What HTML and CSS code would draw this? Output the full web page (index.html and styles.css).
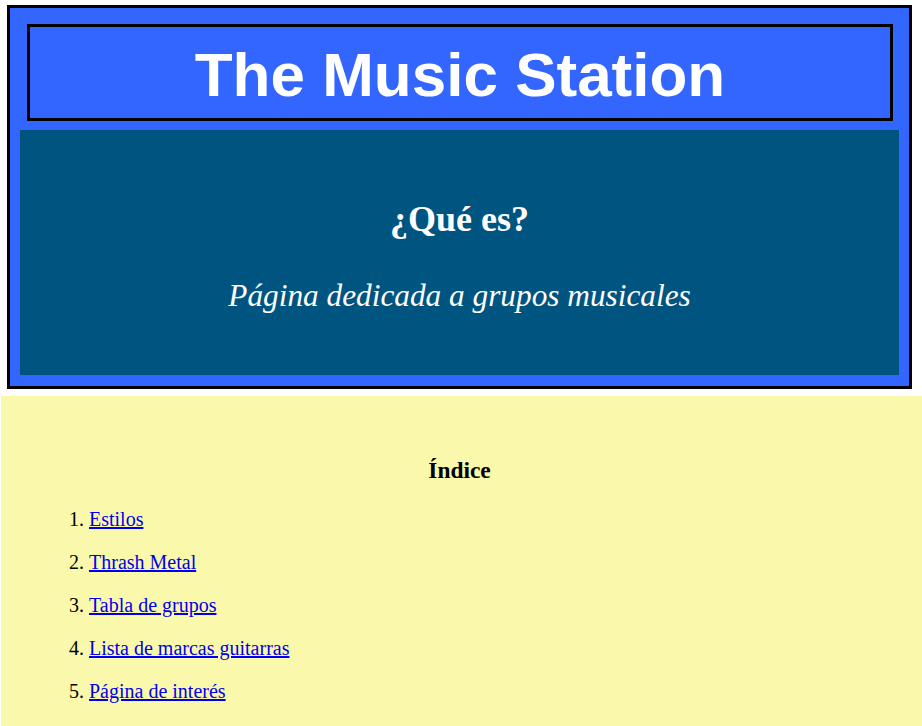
FILE: index.html
```html
<!DOCTYPE html>
<html lang="es">
<head>
<meta charset="utf-8">
<title>The Music Station</title>
<link rel="stylesheet" href="styles.css">
</head>
<body>
<header class="cabecera">
  <h1 class="titulo">The Music Station</h1>
  <section class="que-es">
    <h2 class="que-es-titulo">¿Qué es?</h2>
    <p class="que-es-texto">Página dedicada a grupos musicales</p>
  </section>
</header>
<nav class="indice">
  <h3 class="indice-titulo">Índice</h3>
  <ol class="indice-lista">
    <li><p class="item"><a href="#estilos">Estilos</a></p></li>
    <li><p class="item"><a href="#thrash">Thrash Metal</a></p></li>
    <li><p class="item"><a href="#tabla">Tabla de grupos</a></p></li>
    <li><p class="item"><a href="#marcas">Lista de marcas guitarras</a></p></li>
    <li><p class="item"><a href="#interes">Página de interés</a></p></li>
  </ol>
</nav>
</body>
</html>
```
FILE: styles.css
```css
html, body {
  margin: 0;
  padding: 0;
  background: #ffffff;
}
body {
  font-family: "Liberation Serif", "Times New Roman", serif;
  overflow: hidden;
}
.cabecera {
  margin: 5px 10px 0 7px;
  border: 3px solid #000000;
  background: #3366ff;
  padding: 16px 10px 11px 10px;
}
.titulo {
  margin: 0 6px 0 7px;
  border: 3px solid #000000;
  padding-top: 4px;
  font-family: "Liberation Sans", Arial, sans-serif;
  font-weight: bold;
  font-size: 62px;
  line-height: 87px;
  height: 87px;
  text-align: center;
  color: #ffffff;
}
.que-es {
  margin-top: 9px;
  background: #005580;
  height: 245px;
  box-sizing: border-box;
  padding-top: 69px;
  text-align: center;
  color: #ffffff;
}
.que-es-titulo {
  margin: 0;
  font-size: 36px;
  font-weight: bold;
  line-height: 41px;
}
.que-es-texto {
  margin: 38px 0 0 0;
  font-size: 31.3px;
  font-style: italic;
  line-height: 36px;
}
.indice {
  margin: 7px 0 0 1px;
  background: #faf8aa;
  font-size: 20px;
  padding: 61px 4px 20px 0;
  min-height: 400px;
}
.indice-titulo {
  margin: 0;
  text-align: center;
  font-size: 23.4px;
  font-weight: bold;
}
.indice-lista {
  margin: 0;
  padding-left: 88px;
}
.item {
  margin: 24px 0 0 0;
}
.item ~ .item,
li + li .item {
  margin-top: 20px;
}
.item a {
  color: #0000ee;
}
```
